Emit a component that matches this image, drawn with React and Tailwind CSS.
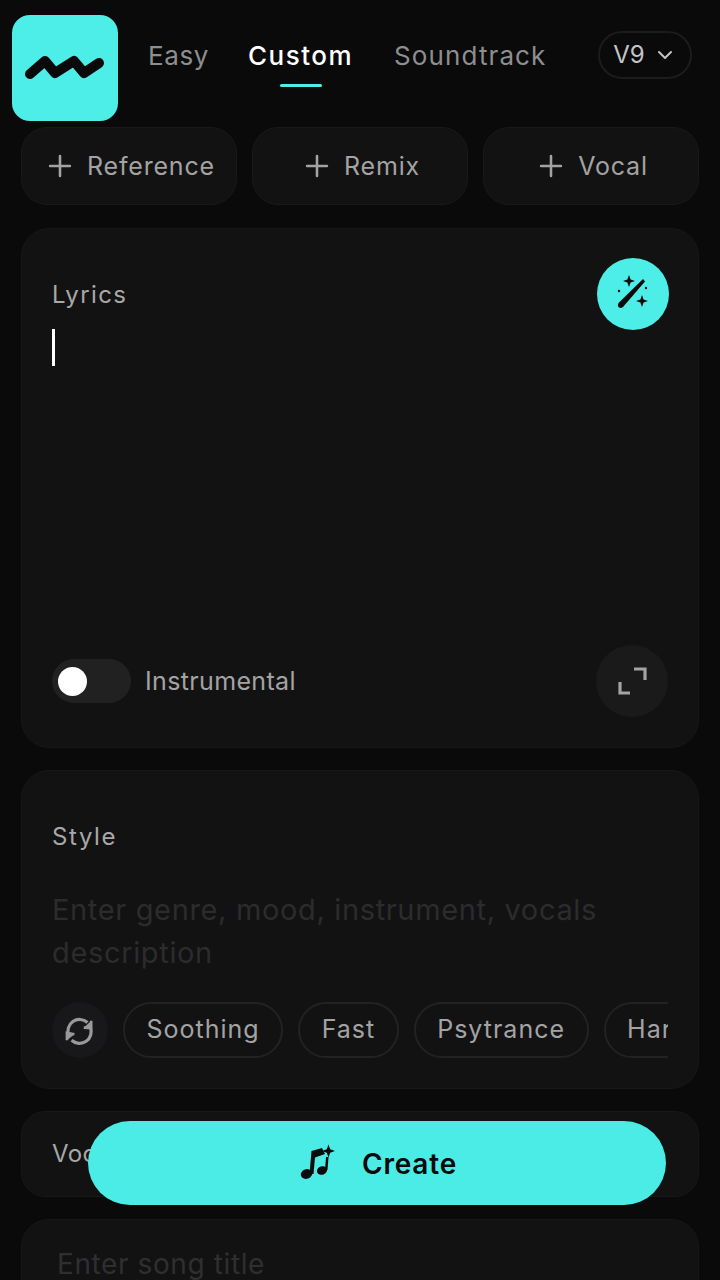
import React from "react";
import { Plus, ChevronDown } from "lucide-react";

const font = "font-['Inter','Liberation_Sans',sans-serif]";

function Logo() {
  return (
    <div className="w-[106px] h-[106px] shrink-0 rounded-[18px] bg-[#4eeee8] flex items-center justify-center">
      <svg width="106" height="56" viewBox="0 0 106 56" fill="none">
        <path
          d="M18 34 L33 21 L43 33 L62 21 L72 33 L87 23"
          stroke="#0a0a0a"
          strokeWidth="10"
          strokeLinecap="round"
          strokeLinejoin="round"
        />
      </svg>
    </div>
  );
}

function WandIcon() {
  return (
    <svg width="60" height="60" viewBox="0 0 60 60" fill="#0b0b0b">
      <path d="M40 15 L42 17.5 L20 43 Q17.5 45 15.5 43 Q14 41 16 38.5 Z" />
      <path d="M26 11 L27.6 15.4 L32 17 L27.6 18.6 L26 23 L24.4 18.6 L20 17 L24.4 15.4 Z" />
      <path d="M39 31 L40.6 35.4 L45 37 L40.6 38.6 L39 43 L37.4 38.6 L33 37 L37.4 35.4 Z" />
      <circle cx="16" cy="27" r="1.2" />
      <circle cx="43" cy="24" r="1.2" />
    </svg>
  );
}

function MusicIcon() {
  return (
    <svg width="36" height="38" viewBox="11 10 36 38" fill="#0b0b0b">
      <ellipse cx="17.5" cy="40" rx="5.8" ry="4.8" transform="rotate(-20 17.5 40)" />
      <ellipse cx="33" cy="36.5" rx="5.2" ry="4.2" transform="rotate(-20 33 36.5)" />
      <path d="M20.5 40 L22.5 17 L33 14 L36 20 L26 23.5 L24.5 40 Z" />
      <path d="M36 36 L37 23 L39.5 23 L38.5 36 Z" />
      <path d="M39.5 10.5 L41.2 15.3 L46 17 L41.2 18.7 L39.5 23.5 L37.8 18.7 L33 17 L37.8 15.3 Z" />
    </svg>
  );
}

function CycleIcon() {
  return (
    <svg width="60" height="60" viewBox="0 0 60 60" fill="none" stroke="#9a9a9a" strokeWidth="3.4">
      <path d="M18 36 A12.5 12.5 0 0 1 38 22" />
      <path d="M41 27 A12.5 12.5 0 0 1 21 41" />
      <path d="M42 20 L42 28 L34 27.5" strokeWidth="2.8" fill="#9a9a9a" />
      <path d="M16 41 L16 33 L24 34.5" strokeWidth="2.8" fill="#9a9a9a" />
    </svg>
  );
}

function AddButton({ label }) {
  return (
    <button className="flex-1 h-[78px] rounded-[26px] bg-[#121213] border border-[#191919] flex items-center justify-center gap-[10px] text-[25px] tracking-[0.8px] text-[#a3a3a3]">
      <Plus size={34} strokeWidth={1.8} />
      <span className="relative top-[1px]">{label}</span>
    </button>
  );
}

function Chip({ label }) {
  return (
    <span className="shrink-0 h-[56px] px-[21.5px] rounded-full border-2 border-[#222223] flex items-center text-[25px] tracking-[1px] text-[#a3a3a3]">
      {label}
    </span>
  );
}

export default function App() {
  return (
    <div className={`relative h-[1280px] overflow-hidden bg-[#0a0a0b] ${font}`}>
      {/* Header */}
      <header className="flex pl-3 pr-7 pt-[15px]">
        <Logo />
        <nav className="flex pl-[30px] pt-[21px] text-[26px] h-[72px]">
          <span className="text-[#8e8e8e] tracking-[0.6px]">Easy</span>
          <span className="ml-[39px] flex flex-col items-center font-medium tracking-[1.5px] text-white">
            Custom
            <span className="mt-[9px] w-[42px] h-[5px] rounded-full bg-[#4eeee8]" />
          </span>
          <span className="ml-[41px] text-[#8e8e8e] tracking-[1.1px]">Soundtrack</span>
        </nav>
        <button className="ml-auto mt-[16px] w-[94px] h-[48px] rounded-full border-2 border-[#1c1c1d] flex items-center justify-center gap-[8px] text-[24px] text-[#c4c4c4]">
          V9
          <ChevronDown size={24} />
        </button>
      </header>

      <main className="px-[21px] pt-[6px] flex flex-col">
        {/* Add buttons */}
        <div className="flex gap-[15px]">
          <AddButton label="Reference" />
          <AddButton label="Remix" />
          <AddButton label="Vocal" />
        </div>

        {/* Lyrics */}
        <section className="mt-[23px] h-[520px] rounded-[28px] bg-[#121213] border border-[#171718] px-[30px] pt-[29px] pb-[30px] flex flex-col">
          <div className="flex items-start justify-between">
            <div>
              <div className="mt-[22px] text-[24px] leading-[30px] tracking-[1.4px] text-[#a8a8a8]">Lyrics</div>
              <div className="mt-[19px] w-[3px] h-[37px] bg-white" />
            </div>
            <button className="w-[72px] h-[72px] mr-[-1px] rounded-full bg-[#4eeee8] flex items-center justify-center">
              <WandIcon />
            </button>
          </div>
          <div className="mt-auto flex items-center justify-between">
            <div className="flex items-center gap-[14px]">
              <div className="w-[79px] h-[44px] rounded-full bg-[#212122] flex items-center pl-[6px]">
                <div className="w-[29px] h-[29px] rounded-full bg-white" />
              </div>
              <span className="relative top-[1px] text-[25px] tracking-[0.35px] text-[#a3a3a3]">Instrumental</span>
            </div>
            <button className="w-[72px] h-[72px] rounded-full bg-[#1a1a1b] flex items-center justify-center">
              <svg width="30" height="30" viewBox="0 0 30 30" fill="none" stroke="#a3a3a3" strokeWidth="3.2">
                <path d="M17 3 H28 V14" />
                <path d="M3 16 V27 H13" />
              </svg>
            </button>
          </div>
        </section>

        {/* Style */}
        <section className="mt-[22px] h-[319px] rounded-[28px] bg-[#121213] border border-[#171718] pl-[30px] pr-[30px] pt-[51px]">
          <div className="text-[24px] leading-[30px] tracking-[1.6px] text-[#a8a8a8]">Style</div>
          <p className="mt-[36px] text-[29px] leading-[43px] tracking-[0.65px] text-[#2c2c2d]">
            Enter genre, mood, instrument, vocals description
          </p>
          <div className="mt-[28px] flex items-center gap-[15px] overflow-hidden">
            <button className="shrink-0 w-[56px] h-[56px] rounded-full bg-[#18181a] flex items-center justify-center">
              <CycleIcon />
            </button>
            <Chip label="Soothing" />
            <Chip label="Fast" />
            <Chip label="Psytrance" />
            <Chip label="Hardcore" />
          </div>
        </section>

        {/* Vocal */}
        <section className="mt-[22px] h-[86px] rounded-[24px] bg-[#121213] border border-[#171718] pl-[30px] flex items-center">
          <span className="text-[24px] tracking-[0.4px] text-[#a8a8a8]">Vocal Gender</span>
        </section>

        {/* Title */}
        <section className="mt-[22px] h-[120px] rounded-[28px] bg-[#121213] border border-[#171718] pl-[35px] pt-[23px]">
          <span className="text-[28px] tracking-[0.6px] text-[#2f2f30]">Enter song title</span>
        </section>
      </main>

      {/* Create button floats over the form */}
      <button className="absolute left-[88px] top-[1121px] w-[578px] h-[84px] rounded-full bg-[#4bece6] flex items-center justify-center gap-[26px] pl-[3px] text-[28px] font-semibold tracking-[0.8px] text-[#0a0a0a]">
        <MusicIcon />
        <span className="relative top-[1px]">Create</span>
      </button>
    </div>
  );
}
